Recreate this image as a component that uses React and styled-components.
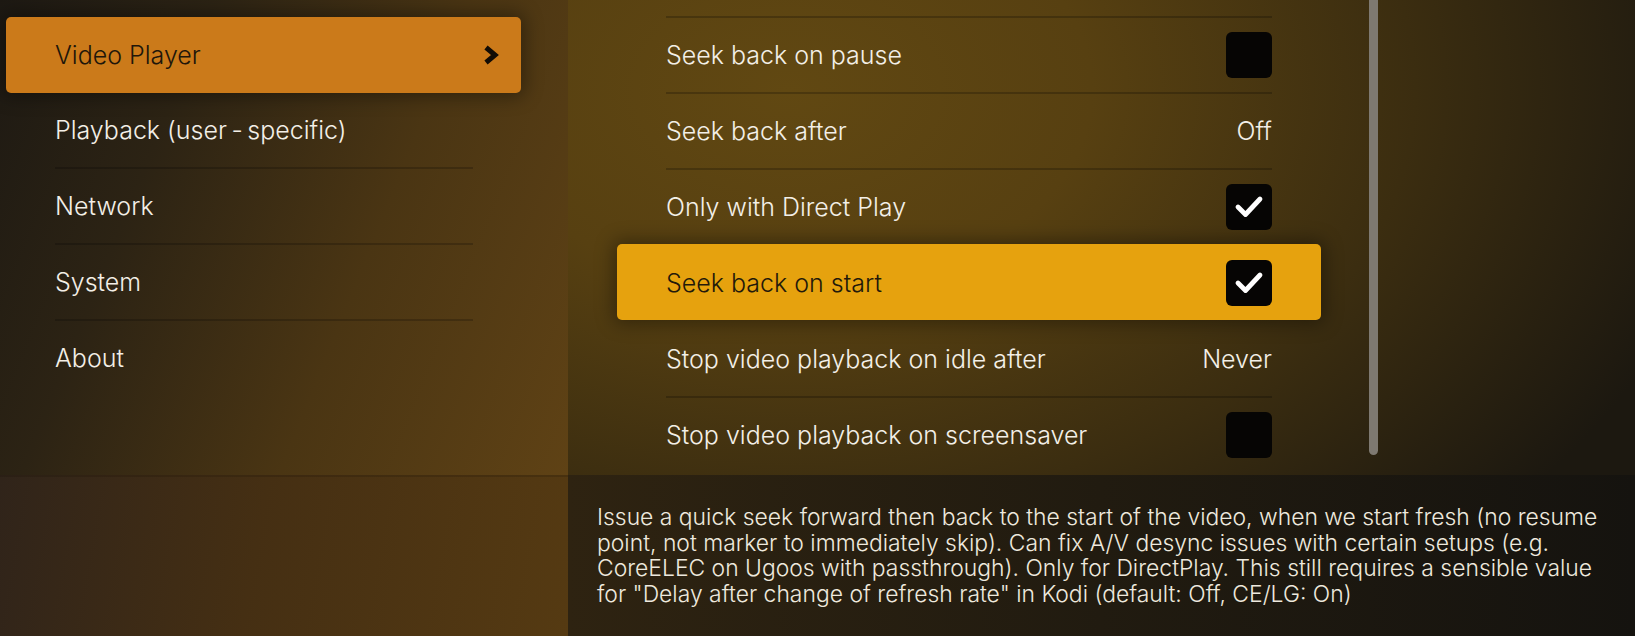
import React from 'react';
import styled, { createGlobalStyle } from 'styled-components'

const Global = createGlobalStyle`
html, body {
  margin: 0;
  padding: 0;
  background: #1c1810;
}
body {
  font-family: Inter, "Noto Sans", sans-serif;
  font-weight: 300;
}
`

const Screen = styled.div`
width: 1635px;
height: 636px;
overflow: hidden;
display: flex;
flex-direction: column;
background: #1c1810;
`

const Top = styled.div`
height: 475px;
display: flex;
overflow: hidden;
`

const Sidebar = styled.div`
width: 568px;
flex-shrink: 0;
padding-top: 17px;
box-sizing: border-box;
background: linear-gradient(112deg, #1d1913 0%, #2c2314 28%, #4a3513 62%, #5f4215 100%);
`

const MenuItem = styled.div`
height: 76px;
box-sizing: border-box;
display: flex;
align-items: center;
justify-content: space-between;
font-size: 25px;
color: ${p => p.$active ? '#20160a' : '#f3efe7'};
${p => p.$active ? `
  margin-left: 6px;
  width: 515px;
  padding: 0 21px 0 49px;
  background: #cb7a1a;
  border-radius: 5px;
  box-shadow: 0 0 18px 4px rgba(0,0,0,0.35);
` : `
  margin-left: 55px;
  width: 418px;
  border-bottom: 2px solid ${p.$last ? 'transparent' : 'rgba(0,0,0,0.2)'};
`}
`

const Main = styled.div`
flex: 1;
display: flex;
padding-left: 98px;
background: radial-gradient(ellipse 950px 640px at 220px 90px, #614812 0%, #574011 32%, #3b2d10 66%, #1c1810 100%);
`

const List = styled.div`
width: 606px;
padding-top: 16px;
`

const Row = styled.div`
height: 76px;
box-sizing: border-box;
display: flex;
align-items: center;
justify-content: space-between;
font-size: 25px;
border-top: 2px solid ${p => p.$active || p.$afterActive ? 'transparent' : 'rgba(0,0,0,0.22)'};
color: ${p => p.$active ? '#23190a' : '#f3efe7'};
${p => p.$active && `
  margin: 0 -49px;
  padding: 0 49px;
  background: #e6a20e;
  border-radius: 5px;
  box-shadow: 0 0 18px 4px rgba(0,0,0,0.35);
  position: relative;
`}
`

const Value = styled.span`
font-size: 25px;
`

const Box = styled.div`
width: 46px;
height: 46px;
border-radius: 6px;
background: #060504;
display: flex;
align-items: center;
justify-content: center;
`

const Scrollbar = styled.div`
margin-left: 97px;
width: 9px;
height: 455px;
border-radius: 0 0 5px 5px;
background: #7e7971;
`

const Bottom = styled.div`
height: 161px;
display: flex;
`

const BottomLeft = styled.div`
width: 568px;
flex-shrink: 0;
background: linear-gradient(100deg, #30241a 0%, #452f13 45%, #553a12 100%);
border-top: 2px solid rgba(0,0,0,0.15);
box-sizing: border-box;
`

const Description = styled.div`
flex: 1;
box-sizing: border-box;
padding: 30px 10px 0 29px;
background: linear-gradient(90deg, #2e2311 0%, #211b10 50%, #15130f 100%);
color: #eee9de;
font-size: 22.9px;
line-height: 25.5px;
`

function Check() {
  return (
    <svg width="46" height="46" viewBox="0 0 46 46">
      <polyline points="12,23 19.5,30.5 34,15" fill="none" stroke="#fff" strokeWidth="4.8" strokeLinecap="round" strokeLinejoin="round" />
    </svg>
  )
}

function Chevron() {
  return (
    <svg width="18" height="22" viewBox="0 0 18 22">
      <polyline points="4,3.5 13,11 4,18.5" fill="none" stroke="#120c05" strokeWidth="5" strokeLinejoin="miter" />
    </svg>
  )
}

const menu = ['Video Player', 'Playback (user\u2009-\u2009specific)', 'Network', 'System', 'About']

const settings = [
  { label: 'Seek back on pause', check: false },
  { label: 'Seek back after', value: 'Off' },
  { label: 'Only with Direct Play', check: true },
  { label: 'Seek back on start', check: true, active: true },
  { label: 'Stop video playback on idle after', value: 'Never' },
  { label: 'Stop video playback on screensaver', check: false },
]

function App({ }) {
  return (
    <Screen>
      <Global />
      <Top>
        <Sidebar>
          {menu.map((name, i) => (
            <MenuItem key={name} $active={i == 0} $last={i == menu.length - 1}>
              <span>{name}</span>
              {i == 0 && <Chevron />}
            </MenuItem>
          ))}
        </Sidebar>
        <Main>
          <List>
            {settings.map((s, i) => (
              <Row key={s.label} $active={s.active} $afterActive={i > 0 && settings[i - 1].active}>
                <span>{s.label}</span>
                {s.value ? <Value>{s.value}</Value> : <Box>{s.check && <Check />}</Box>}
              </Row>
            ))}
          </List>
          <Scrollbar />
        </Main>
      </Top>
      <Bottom>
        <BottomLeft />
        <Description>
          Issue a quick seek forward then back to the start of the video, when we start fresh (no resume point, not marker to immediately skip). Can fix A/V desync issues with certain setups (e.g. CoreELEC on Ugoos with passthrough). Only for DirectPlay. This still requires a sensible value for "Delay after change of refresh rate" in Kodi (default: Off, CE/LG: On)
        </Description>
      </Bottom>
    </Screen>
  );
}

export default App;
